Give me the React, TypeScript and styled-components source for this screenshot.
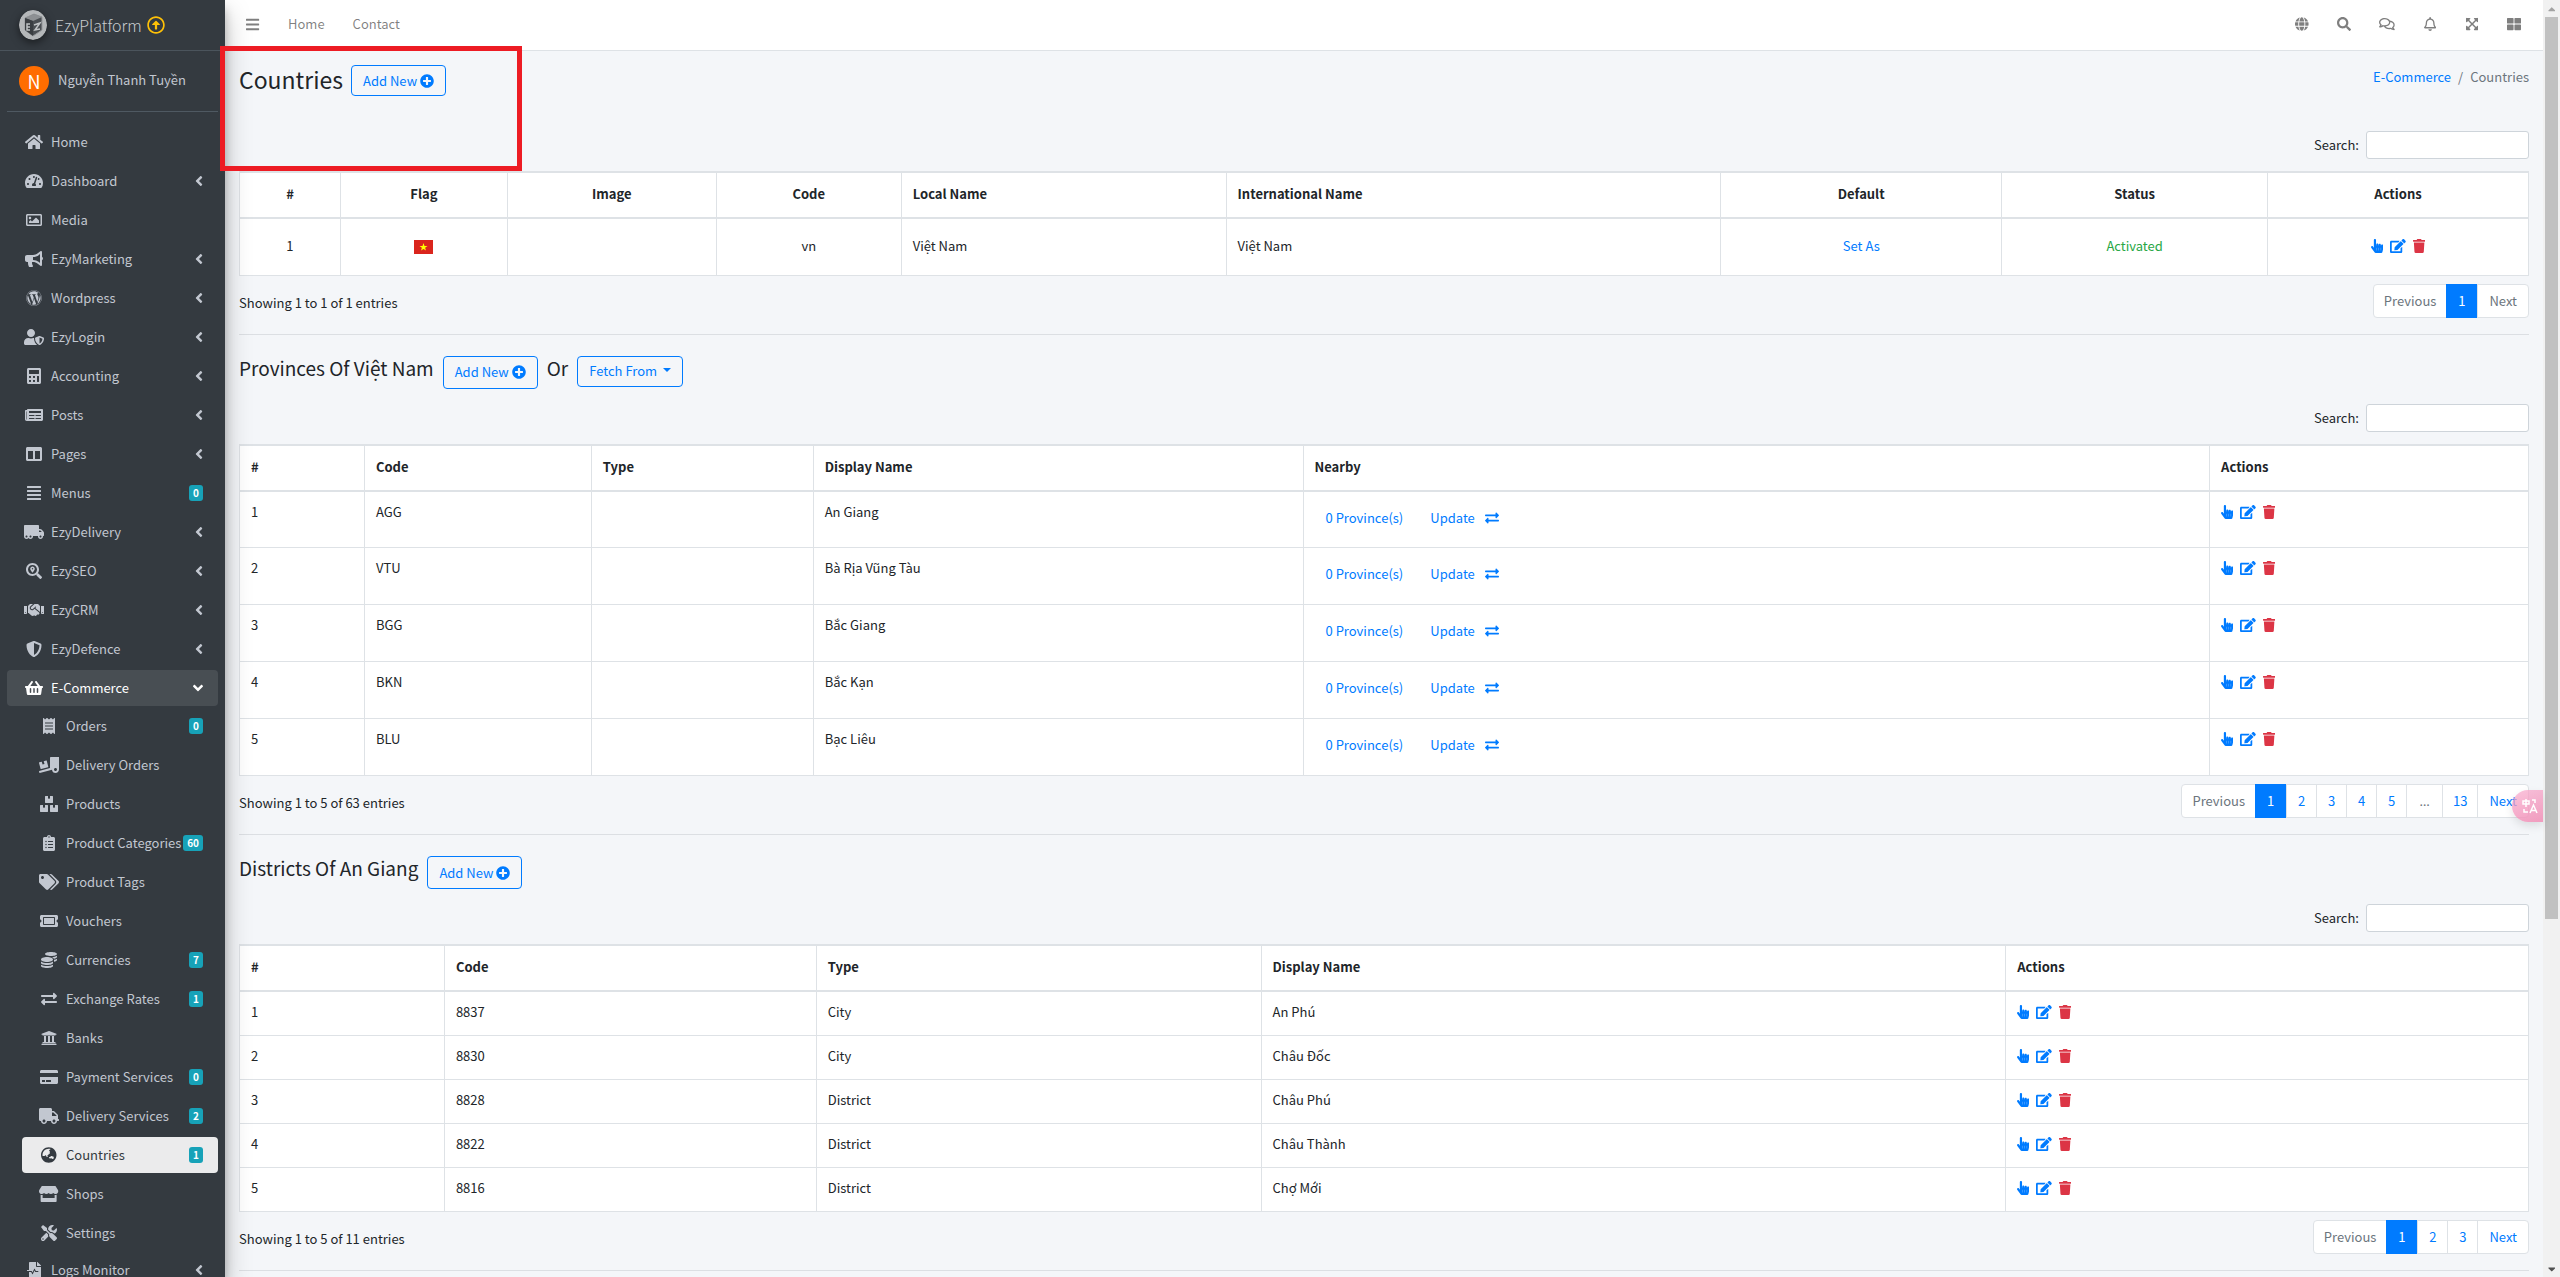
import React from "react";
import styled, { createGlobalStyle, css } from "styled-components";
import {
  FaAlignJustify, FaAngleDown, FaAngleLeft, FaBars, FaBoxes, FaBullhorn, FaCalculator, FaCaretDown, FaCaretUp,
  FaClipboardList, FaCoins, FaColumns, FaCreditCard, FaEdit, FaExchangeAlt, FaExpandArrowsAlt, FaFileMedicalAlt,
  FaGlobe, FaGlobeAsia, FaHandPointer, FaHandshake, FaHome, FaNewspaper, FaPlusCircle, FaReceipt,
  FaRegArrowAltCircleUp, FaRegBell, FaRegComments, FaRegImage, FaSearch, FaSearchLocation, FaShieldAlt,
  FaShoppingBasket, FaStore, FaTachometerAlt, FaTags, FaThLarge, FaTicketAlt, FaTools, FaTrash, FaTruck,
  FaTruckLoading, FaTruckMoving, FaUniversity, FaUserShield, FaWordpress,
} from "react-icons/fa";
import { IconContext } from "react-icons";
import type { IconType } from "react-icons";

const line = "#dee2e6";
const blue = "#007bff";

const GlobalStyle = createGlobalStyle`
  *, *::before, *::after { box-sizing: border-box; }
  body {
    margin: 0;
    background: #f4f6f9;
    color: #212529;
    font-family: "Source Sans Pro", "Noto Sans CJK JP", "Noto Sans", sans-serif;
    font-size: 13px;
    line-height: 22px;
    overflow: hidden;
  }
  a { color: ${blue}; text-decoration: none; }
  ul, ol { list-style: none; margin: 0; padding: 0; }
  button, input { font: inherit; }
  svg { display: block; }
`;

const Shell = styled.div`
  display: flex;
  height: 100vh;
  overflow: hidden;
  position: relative;
`;

/* Icons keep the aspect ratio of their own view box at a fixed height. */
const Icon = styled.span<{ $size?: number }>`
  display: inline-flex;
  align-items: center;
  justify-content: center;
  svg {
    flex: none;
    height: ${(p) => p.$size ?? 14}px;
    width: auto;
  }
`;

/* ---------- sidebar ---------- */

const Sidebar = styled.aside`
  flex: 0 0 225px;
  background: #343a40;
  color: #c2c7d0;
  position: relative;
  z-index: 2;
  box-shadow: 0 13px 25px rgba(0, 0, 0, 0.25), 0 9px 9px rgba(0, 0, 0, 0.22);
`;

const Brand = styled.a`
  display: flex;
  align-items: center;
  height: 51px;
  padding: 0 19px;
  border-bottom: 1px solid #4b545c;
  color: #c8cbce;
  font-size: 16px;
  font-weight: 300;
`;

const BrandName = styled.span`
  margin: 0 5px 0 8px;
`;

const LogoMark = styled.svg`
  width: 28px;
  height: 30px;
  border-radius: 50%;
  filter: drop-shadow(0 3px 4px rgba(0, 0, 0, 0.5));
`;

const UpdateIcon = styled(Icon)`
  color: #ffc107;
`;

const UserPanel = styled.div`
  display: flex;
  align-items: center;
  gap: 9px;
  height: 61px;
  margin: 0 7px;
  padding-left: 12px;
  border-bottom: 1px solid #4f5962;
  a {
    padding-bottom: 2px;
    color: #c2c7d0;
  }
`;

const Avatar = styled.span`
  display: grid;
  place-items: center;
  width: 30px;
  height: 30px;
  border-radius: 50%;
  background: #ff6d00;
  color: #fff;
  font-size: 18px;
`;

const NavList = styled.ul`
  display: flex;
  flex-direction: column;
  gap: 3px;
  padding: 12px 7px 0;
`;

const SubList = styled.ul`
  display: flex;
  flex-direction: column;
  gap: 3px;
  margin: 2px 0 -2px;
  padding-left: 15px;
`;

const NavLink = styled.a<{ $state?: "open" | "current" }>`
  display: flex;
  align-items: center;
  height: 36px;
  padding: 0 15px 0 14px;
  border-radius: 4px;
  color: #c2c7d0;
  white-space: nowrap;
  ${(p) => p.$state === "open" && css`
    background: rgba(255, 255, 255, 0.1);
    color: #fff;
  `}
  ${(p) => p.$state === "current" && css`
    background: rgba(255, 255, 255, 0.9);
    color: #343a40;
  `}
`;

const NavIcon = styled(Icon)`
  flex: 0 0 26px;
  margin-right: 4px;
`;

const NavText = styled.span`
  flex: 1;
`;

const Badge = styled.span`
  border-radius: 3px;
  padding: 0 4px;
  background: #17a2b8;
  color: #fff;
  font-size: 10px;
  font-weight: 700;
  line-height: 16px;
`;

/* ---------- top bar ---------- */

const Body = styled.div`
  flex: 1;
  min-width: 0;
`;

const TopBar = styled.header`
  display: flex;
  align-items: center;
  justify-content: space-between;
  height: 51px;
  padding: 0 22px 2px 21px;
  background: #fff;
  border-bottom: 1px solid ${line};
`;

const TopNav = styled.nav`
  display: flex;
  align-items: center;
  gap: 28px;
  a { color: rgba(0, 0, 0, 0.5); }
`;

const IconButton = styled.button`
  display: grid;
  place-items: center;
  min-width: 14px;
  padding: 0;
  border: 0;
  background: none;
  color: rgba(0, 0, 0, 0.5);
  cursor: pointer;
`;

/* ---------- content ---------- */

const Content = styled.main`
  padding: 0 14px;
`;

const PageHead = styled.div`
  display: flex;
  justify-content: space-between;
  padding-top: 14px;
  height: 80px;
`;

const HeadLine = styled.div<{ $section?: boolean }>`
  display: flex;
  align-items: flex-start;
  gap: ${(p) => (p.$section ? 9 : 8)}px;
  height: ${(p) => (p.$section ? 48 : 31)}px;
`;

const PageTitle = styled.h1`
  margin: 0;
  font-size: 23px;
  font-weight: 400;
  line-height: 29px;
`;

const SectionTitle = styled.h2`
  margin: 0;
  font-size: 19px;
  font-weight: 400;
  line-height: 24px;
`;

const OutlineButton = styled.button<{ $tall?: boolean }>`
  display: inline-flex;
  align-items: center;
  gap: 3px;
  height: ${(p) => (p.$tall ? 33 : 31)}px;
  padding: 0 11px;
  border: 1px solid ${blue};
  border-radius: 4px;
  background: transparent;
  color: ${blue};
  cursor: pointer;
`;

const Caret = styled.span`
  margin: 0 0 2px 3px;
  border: 4px solid transparent;
  border-top-color: currentColor;
  border-bottom: 0;
`;

const Crumbs = styled.ol`
  display: flex;
  gap: 7px;
  padding-top: 1px;
  color: #6c757d;
`;

const SearchRow = styled.div`
  display: flex;
  justify-content: flex-end;
  align-items: center;
  gap: 7px;
  margin-bottom: 12px;
`;

const SearchInput = styled.input`
  width: 163px;
  height: 28px;
  padding: 3px 7px;
  border: 1px solid #ced4da;
  border-radius: 3px;
  background: #fff;
`;

const Table = styled.table<{ $centered?: boolean; $rowHeight: number }>`
  width: 100%;
  table-layout: fixed;
  border-collapse: collapse;
  background: #fff;
  th, td {
    border: 1px solid ${line};
    padding: 9px 11px 11px;
    text-align: left;
    vertical-align: ${(p) => (p.$centered ? "middle" : "top")};
  }
  th {
    height: 46px;
    border-top-width: 2px;
    border-bottom-width: 2px;
    vertical-align: middle;
    font-weight: 700;
  }
  td { height: ${(p) => p.$rowHeight}px; }
`;

const HeadCell = styled.th<{ $center?: boolean }>`
  && { text-align: ${(p) => (p.$center ? "center" : "left")}; }
`;

const Cell = styled.td<{ $center?: boolean }>`
  && { text-align: ${(p) => (p.$center ? "center" : "left")}; }
`;

const Flag = styled.svg`
  display: inline-block;
  vertical-align: middle;
  width: 19px;
  height: 14px;
`;

const Activated = styled.span`
  color: #28a745;
`;

const ActionGroup = styled.span`
  display: inline-flex;
  align-items: center;
  gap: 7px;
  height: 22px;
  vertical-align: top;
`;

const Action = styled.a<{ $danger?: boolean }>`
  display: inline-flex;
  color: ${(p) => (p.$danger ? "#dc3545" : blue)};
`;

const Nearby = styled.span`
  display: flex;
  gap: 27px;
  padding: 6px 11px 0;
`;

const Update = styled.a`
  display: inline-flex;
  align-items: center;
  gap: 10px;
`;

const TableFoot = styled.div`
  display: flex;
  justify-content: space-between;
  align-items: flex-start;
  margin: 8px 0 16px;
`;

const Info = styled.div`
  padding-top: 8px;
`;

const Pages = styled.ul`
  display: flex;
  height: 34px;
  border: 1px solid ${line};
  border-radius: 4px;
  background: #fff;
  li + li { border-left: 1px solid ${line}; }
  li:last-child { padding: 0 1px; }
`;

const PageLink = styled.a<{ $kind?: "active" | "muted" | "gap" }>`
  display: block;
  min-width: 29px;
  padding: 5px 10px;
  text-align: center;
  color: ${blue};
  ${(p) => p.$kind === "muted" && css`color: #6c757d;`}
  ${(p) => p.$kind === "gap" && css`
    min-width: 35px;
    color: #6c757d;
    font-family: "Noto Sans", sans-serif;
  `}
  ${(p) => p.$kind === "active" && css`
    min-width: 31px;
    margin: -1px 0 -1px -1px;
    padding: 6px 10px;
    background: ${blue};
    color: #fff;
  `}
`;

const Divider = styled.hr`
  height: 1px;
  margin: 0 0 21px;
  border: 0;
  background: #dcdfe3;
`;

/* ---------- overlays and scroll bar ---------- */

const ScrollTrack = styled.div`
  flex: 0 0 17px;
  display: flex;
  flex-direction: column;
  align-items: center;
  justify-content: space-between;
  background: #f1f1f1;
  color: #505050;
`;

const ScrollTop = styled.div`
  display: flex;
  flex-direction: column;
  align-items: center;
  width: 13px;
  height: 72vh;
  color: #a3a3a3;
`;

const ScrollArrow = styled.span`
  display: grid;
  place-items: center;
  flex: 0 0 17px;
`;

const ScrollThumb = styled.span`
  flex: 1;
  width: 13px;
  background: #c1c1c1;
`;

const Highlight = styled.div`
  position: absolute;
  z-index: 3;
  left: 220px;
  top: 46px;
  width: 302px;
  height: 125px;
  border: 5px solid #ed1c24;
  pointer-events: none;
`;

const TranslateTab = styled.button`
  position: absolute;
  z-index: 3;
  right: 17px;
  top: 790px;
  display: flex;
  align-items: center;
  width: 31px;
  height: 32px;
  padding: 0 0 0 10px;
  border: 0;
  border-radius: 16px 0 0 16px;
  background: linear-gradient(160deg, rgba(248, 170, 205, 0.7), rgba(240, 140, 180, 0.85));
  box-shadow: 0 4px 8px rgba(0, 0, 0, 0.1);
`;

/* ---------- data ---------- */

type NavEntry = { label: string; icon: IconType; badge?: string; arrow?: boolean; current?: boolean; children?: NavEntry[] };

const menu: NavEntry[] = [
  { label: "Home", icon: FaHome },
  { label: "Dashboard", icon: FaTachometerAlt, arrow: true },
  { label: "Media", icon: FaRegImage },
  { label: "EzyMarketing", icon: FaBullhorn, arrow: true },
  { label: "Wordpress", icon: FaWordpress, arrow: true },
  { label: "EzyLogin", icon: FaUserShield, arrow: true },
  { label: "Accounting", icon: FaCalculator, arrow: true },
  { label: "Posts", icon: FaNewspaper, arrow: true },
  { label: "Pages", icon: FaColumns, arrow: true },
  { label: "Menus", icon: FaAlignJustify, badge: "0" },
  { label: "EzyDelivery", icon: FaTruckMoving, arrow: true },
  { label: "EzySEO", icon: FaSearchLocation, arrow: true },
  { label: "EzyCRM", icon: FaHandshake, arrow: true },
  { label: "EzyDefence", icon: FaShieldAlt, arrow: true },
  {
    label: "E-Commerce",
    icon: FaShoppingBasket,
    children: [
      { label: "Orders", icon: FaReceipt, badge: "0" },
      { label: "Delivery Orders", icon: FaTruckLoading },
      { label: "Products", icon: FaBoxes },
      { label: "Product Categories", icon: FaClipboardList, badge: "60" },
      { label: "Product Tags", icon: FaTags },
      { label: "Vouchers", icon: FaTicketAlt },
      { label: "Currencies", icon: FaCoins, badge: "7" },
      { label: "Exchange Rates", icon: FaExchangeAlt, badge: "1" },
      { label: "Banks", icon: FaUniversity },
      { label: "Payment Services", icon: FaCreditCard, badge: "0" },
      { label: "Delivery Services", icon: FaTruck, badge: "2" },
      { label: "Countries", icon: FaGlobeAsia, badge: "1", current: true },
      { label: "Shops", icon: FaStore },
      { label: "Settings", icon: FaTools },
    ],
  },
  { label: "Logs Monitor", icon: FaFileMedicalAlt, arrow: true },
];

type Column = { label: string; weight: number; center?: boolean };

const countryColumns: Column[] = [
  { label: "#", weight: 101, center: true },
  { label: "Flag", weight: 167, center: true },
  { label: "Image", weight: 209, center: true },
  { label: "Code", weight: 185, center: true },
  { label: "Local Name", weight: 325 },
  { label: "International Name", weight: 495 },
  { label: "Default", weight: 281, center: true },
  { label: "Status", weight: 266, center: true },
  { label: "Actions", weight: 261, center: true },
];

const provinceColumns: Column[] = [
  { label: "#", weight: 125 },
  { label: "Code", weight: 227 },
  { label: "Type", weight: 222 },
  { label: "Display Name", weight: 490 },
  { label: "Nearby", weight: 907 },
  { label: "Actions", weight: 319 },
];

const districtColumns: Column[] = [
  { label: "#", weight: 205 },
  { label: "Code", weight: 372 },
  { label: "Type", weight: 445 },
  { label: "Display Name", weight: 745 },
  { label: "Actions", weight: 523 },
];

const provinces = [
  ["AGG", "An Giang"],
  ["VTU", "Bà Rịa Vũng Tàu"],
  ["BGG", "Bắc Giang"],
  ["BKN", "Bắc Kạn"],
  ["BLU", "Bạc Liêu"],
];

const districts = [
  ["8837", "City", "An Phú"],
  ["8830", "City", "Châu Đốc"],
  ["8828", "District", "Châu Phú"],
  ["8822", "District", "Châu Thành"],
  ["8816", "District", "Chợ Mới"],
];

/* ---------- parts ---------- */

function NavItem({ entry }: { entry: NavEntry }) {
  const Glyph = entry.icon;
  return (
    <li>
      <NavLink href="#" $state={entry.children ? "open" : entry.current ? "current" : undefined}>
        <NavIcon $size={16}><Glyph /></NavIcon>
        <NavText>{entry.label}</NavText>
        {entry.badge && <Badge>{entry.badge}</Badge>}
        {entry.arrow && <Icon $size={16}><FaAngleLeft /></Icon>}
        {entry.children && <Icon $size={16}><FaAngleDown /></Icon>}
      </NavLink>
      {entry.children && (
        <SubList>
          {entry.children.map((child) => <NavItem key={child.label} entry={child} />)}
        </SubList>
      )}
    </li>
  );
}

function TableHead({ columns }: { columns: Column[] }) {
  const total = columns.reduce((sum, c) => sum + c.weight, 0);
  return (
    <>
      <colgroup>
        {columns.map((c) => <col key={c.label} style={{ width: `${(c.weight / total) * 100}%` }} />)}
      </colgroup>
      <thead>
        <tr>
          {columns.map((c) => <HeadCell key={c.label} scope="col" $center={c.center}>{c.label}</HeadCell>)}
        </tr>
      </thead>
    </>
  );
}

function RowActions() {
  return (
    <ActionGroup>
      <Action href="#" aria-label="Select"><Icon><FaHandPointer /></Icon></Action>
      <Action href="#" aria-label="Edit"><Icon><FaEdit /></Icon></Action>
      <Action href="#" aria-label="Delete" $danger><Icon><FaTrash /></Icon></Action>
    </ActionGroup>
  );
}

function Search({ id }: { id: string }) {
  return (
    <SearchRow>
      <label htmlFor={id}>Search:</label>
      <SearchInput id={id} type="search" />
    </SearchRow>
  );
}

function Footer({ info, pages, last }: { info: string; pages: string[]; last?: boolean }) {
  return (
    <TableFoot>
      <Info>{info}</Info>
      <Pages>
        <li><PageLink href="#" $kind="muted">Previous</PageLink></li>
        {pages.map((p) => (
          <li key={p}>
            <PageLink href="#" $kind={p === "1" ? "active" : p === "…" ? "gap" : undefined}>{p}</PageLink>
          </li>
        ))}
        <li><PageLink href="#" $kind={last ? "muted" : undefined}>Next</PageLink></li>
      </Pages>
    </TableFoot>
  );
}

function AddNew({ tall }: { tall?: boolean }) {
  return (
    <OutlineButton $tall={tall}>Add New <Icon><FaPlusCircle /></Icon></OutlineButton>
  );
}

function Logo() {
  return (
    <LogoMark viewBox="0 0 28 30" aria-hidden="true">
      <ellipse cx="14" cy="15" rx="14" ry="15" fill="#b4b7b9" />
      <path d="M6 8 L15 4 L23 7 L23 20 L14 26 L6 20 Z" fill="#4a4e52" stroke="#94979a" strokeWidth="1" />
      <path d="M6 8 L15 4 L23 7 L14 11 Z" fill="#8d9093" />
      <path d="M6 8 L14 11 L14 26 L6 20 Z" fill="#3a3e42" />
      <path d="M11 14 H8 V20 H11 M8 17 H11 M15 15 L21 13 L16 20 L21 19" stroke="#bfc2c4" strokeWidth="1.500" fill="none" />
    </LogoMark>
  );
}

export default function App() {
  return (
    <IconContext.Provider value={{ size: "100%" }}>
      <GlobalStyle />
      <Shell>
        <Sidebar>
          <Brand href="#">
            <Logo />
            <BrandName>EzyPlatform</BrandName>
            <UpdateIcon $size={18}><FaRegArrowAltCircleUp /></UpdateIcon>
          </Brand>
          <UserPanel>
            <Avatar>N</Avatar>
            <a href="#">Nguyễn Thanh Tuyền</a>
          </UserPanel>
          <nav>
            <NavList>
              {menu.map((entry) => <NavItem key={entry.label} entry={entry} />)}
            </NavList>
          </nav>
        </Sidebar>

        <Body>
          <TopBar>
            <TopNav>
              <IconButton aria-label="Toggle menu"><Icon $size={15}><FaBars /></Icon></IconButton>
              <a href="#">Home</a>
              <a href="#">Contact</a>
            </TopNav>
            <TopNav>
              <IconButton aria-label="Language"><Icon><FaGlobe /></Icon></IconButton>
              <IconButton aria-label="Search"><Icon><FaSearch /></Icon></IconButton>
              <IconButton aria-label="Messages"><Icon><FaRegComments /></Icon></IconButton>
              <IconButton aria-label="Notifications"><Icon><FaRegBell /></Icon></IconButton>
              <IconButton aria-label="Full screen"><Icon><FaExpandArrowsAlt /></Icon></IconButton>
              <IconButton aria-label="Apps"><Icon><FaThLarge /></Icon></IconButton>
            </TopNav>
          </TopBar>

          <Content>
            <PageHead>
              <HeadLine>
                <PageTitle>Countries</PageTitle>
                <AddNew />
              </HeadLine>
              <Crumbs>
                <li><a href="#">E-Commerce</a></li>
                <li>/</li>
                <li>Countries</li>
              </Crumbs>
            </PageHead>

            <section>
              <Search id="search-countries" />
              <Table $centered $rowHeight={57}>
                <TableHead columns={countryColumns} />
                <tbody>
                  <tr>
                    <Cell $center>1</Cell>
                    <Cell $center>
                      <Flag viewBox="0 0 19 14" role="img" aria-label="Vietnam">
                        <rect width="19" height="14" fill="#da251d" />
                        <path d="M9.500 3 L10.500 6 L13.500 6 L11.100 7.800 L12 10.600 L9.500 8.900 L7 10.600 L7.900 7.800 L5.500 6 L8.500 6 Z" fill="#ff0" />
                      </Flag>
                    </Cell>
                    <Cell />
                    <Cell $center>vn</Cell>
                    <Cell>Việt Nam</Cell>
                    <Cell>Việt Nam</Cell>
                    <Cell $center><a href="#">Set As</a></Cell>
                    <Cell $center><Activated>Activated</Activated></Cell>
                    <Cell $center><RowActions /></Cell>
                  </tr>
                </tbody>
              </Table>
              <Footer info="Showing 1 to 1 of 1 entries" pages={["1"]} last />
            </section>
            <Divider />

            <section>
              <HeadLine $section>
                <SectionTitle>Provinces Of Việt Nam</SectionTitle>
                <AddNew tall />
                <SectionTitle as="span">Or</SectionTitle>
                <OutlineButton>Fetch From <Caret /></OutlineButton>
              </HeadLine>
              <Search id="search-provinces" />
              <Table $rowHeight={57}>
                <TableHead columns={provinceColumns} />
                <tbody>
                  {provinces.map(([code, name], i) => (
                    <tr key={code}>
                      <Cell>{i + 1}</Cell>
                      <Cell>{code}</Cell>
                      <Cell />
                      <Cell>{name}</Cell>
                      <Cell>
                        <Nearby>
                          <a href="#">0 Province(s)</a>
                          <Update href="#">Update <Icon><FaExchangeAlt /></Icon></Update>
                        </Nearby>
                      </Cell>
                      <Cell><RowActions /></Cell>
                    </tr>
                  ))}
                </tbody>
              </Table>
              <Footer info="Showing 1 to 5 of 63 entries" pages={["1", "2", "3", "4", "5", "…", "13"]} />
            </section>
            <Divider />

            <section>
              <HeadLine $section>
                <SectionTitle>Districts Of An Giang</SectionTitle>
                <AddNew tall />
              </HeadLine>
              <Search id="search-districts" />
              <Table $rowHeight={44}>
                <TableHead columns={districtColumns} />
                <tbody>
                  {districts.map(([code, type, name], i) => (
                    <tr key={code}>
                      <Cell>{i + 1}</Cell>
                      <Cell>{code}</Cell>
                      <Cell>{type}</Cell>
                      <Cell>{name}</Cell>
                      <Cell><RowActions /></Cell>
                    </tr>
                  ))}
                </tbody>
              </Table>
              <Footer info="Showing 1 to 5 of 11 entries" pages={["1", "2", "3"]} />
            </section>
            <Divider />
          </Content>
        </Body>

        <ScrollTrack aria-hidden="true">
          <ScrollTop>
            <ScrollArrow><Icon $size={12}><FaCaretUp /></Icon></ScrollArrow>
            <ScrollThumb />
          </ScrollTop>
          <ScrollArrow><Icon $size={12}><FaCaretDown /></Icon></ScrollArrow>
        </ScrollTrack>

        <Highlight />
        <TranslateTab aria-label="Translate">
          <svg width="16" height="16" viewBox="0 0 16 16" fill="none" stroke="#fff" strokeWidth="1.500">
            <path d="M1 3 H7 V6 H1 Z M4 1 V9 M10 2 H13 V5 M2 11 V14 H6 M8 15 L11.500 7 L15 15 M9.500 12.500 H13.500" />
          </svg>
        </TranslateTab>
      </Shell>
    </IconContext.Provider>
  );
}
